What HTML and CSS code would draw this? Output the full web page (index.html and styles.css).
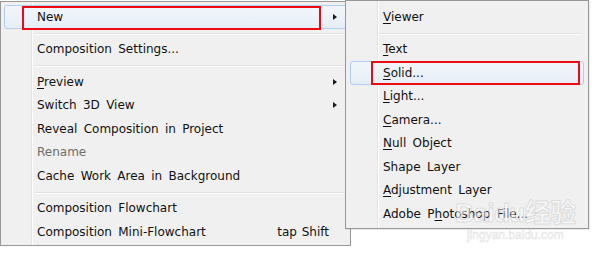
FILE: index.html
```html
<!DOCTYPE html>
<html>
<head>
<meta charset="utf-8">
<link rel="stylesheet" href="styles.css">
</head>
<body>
<div class="stage">
  <div class="menu main">
    <div class="item hover"><span class="label">New</span><span class="arrow"></span></div>
    <div class="sep"></div>
    <div class="item"><span class="label">Composition Settings...</span></div>
    <div class="sep"></div>
    <div class="item"><span class="label"><u>P</u>review</span><span class="arrow"></span></div>
    <div class="item"><span class="label">Switch 3D View</span><span class="arrow"></span></div>
    <div class="item"><span class="label">Reveal Composition in Project</span></div>
    <div class="item disabled"><span class="label">Rename</span></div>
    <div class="item"><span class="label">Cache Work Area in Background</span></div>
    <div class="sep"></div>
    <div class="item"><span class="label">Composition Flowchart</span></div>
    <div class="item"><span class="label">Composition Mini-Flowchart</span><span class="shortcut">tap Shift</span></div>
  </div>

  <div class="menu sub">
    <div class="item"><span class="label"><u>V</u>iewer</span></div>
    <div class="sep"></div>
    <div class="item"><span class="label"><u>T</u>ext</span></div>
    <div class="item hover"><span class="label"><u>S</u>olid...</span></div>
    <div class="item"><span class="label"><u>L</u>ight...</span></div>
    <div class="item"><span class="label"><u>C</u>amera...</span></div>
    <div class="item"><span class="label"><u>N</u>ull Object</span></div>
    <div class="item"><span class="label">Shape Layer</span></div>
    <div class="item"><span class="label"><u>A</u>djustment Layer</span></div>
    <div class="item"><span class="label">Adobe P<u>h</u>otoshop File...</span></div>
  </div>

  <div class="mark mark-new"></div>
  <div class="mark mark-solid"></div>

  <div class="watermark">
    <div class="wm-logo">Baidu经验</div>
    <div class="wm-url">jingyan.baidu.com</div>
  </div>
</div>
</body>
</html>
```

FILE: styles.css
```css
html, body {
  margin: 0;
  padding: 0;
  background: #ffffff;
}

body {
  font-family: "DejaVu Sans", "Noto Sans", sans-serif;
  font-size: 12px;
  word-spacing: 2.5px;
  color: #111;
}

.stage {
  position: relative;
  width: 595px;
  height: 263px;
  overflow: hidden;
  padding-top: 1px;
  box-sizing: border-box;
}

.menu {
  box-sizing: border-box;
  border: 1px solid #979797;
  display: flex;
  flex-direction: column;
}

.main {
  width: 351px;
  height: 245px;
  padding: 3px 2px 1.5px 2px;
  background:
    linear-gradient(to right,
      transparent 30px, #e2e3e3 30px, #e2e3e3 31px,
      #ffffff 31px, #ffffff 32px, transparent 32px),
    #f0f0f0;
  background-origin: padding-box;
}

.sub {
  position: absolute;
  left: 345px;
  top: 0;
  width: 244px;
  height: 229px;
  padding: 4.5px 3px 1.5px 3px;
  background:
    linear-gradient(to right,
      transparent 31px, #e2e3e3 31px, #e2e3e3 32px,
      #ffffff 32px, #ffffff 33px, transparent 33px),
    #f0f0f0;
  box-shadow: 1px 1px 1px rgba(0, 0, 0, 0.08);
  z-index: 2;
}

.item {
  box-sizing: border-box;
  height: 23.5px;
  flex: none;
  display: flex;
  align-items: center;
  border: 1px solid transparent;
  border-radius: 3px;
  padding-left: 32px;
  padding-right: 8px;
  white-space: nowrap;
}

.main .item {
  margin-left: 1px;
}

.sub .item {
  padding-left: 32px;
  margin-left: 1px;
  margin-right: 1px;
}

.item.hover {
  border-color: #b0cdf2;
  background: linear-gradient(#f3f7fc, #e6edf7);
}

.item.disabled {
  color: #6d6d6d;
}

.label {
  flex: 1;
}

.label u {
  text-decoration-thickness: 1px;
  text-underline-offset: 2px;
}

.shortcut {
  margin-right: 10px;
  word-spacing: 1px;
}

.arrow {
  width: 0;
  height: 0;
  border-top: 3.5px solid transparent;
  border-bottom: 3.5px solid transparent;
  border-left: 4px solid #1a1a1a;
  margin-right: 2px;
}

.sep {
  flex: none;
  height: 9px;
  margin-left: 31px;
  margin-right: 0;
  background: linear-gradient(to bottom,
    transparent 4px, #e0e0e0 4px, #e0e0e0 5px,
    #ffffff 5px, #ffffff 6px, transparent 6px);
}

.sub .sep {
  height: 8.5px;
  margin-left: 30px;
  margin-right: 3px;
  background: linear-gradient(to bottom,
    transparent 3.5px, #e0e0e0 3.5px, #e0e0e0 4.5px,
    #ffffff 4.5px, #ffffff 5.5px, transparent 5.5px);
}

.mark {
  position: absolute;
  box-sizing: border-box;
  border: 2px solid #ee0a12;
  z-index: 3;
}

.mark-new {
  left: 22px;
  top: 6px;
  width: 299px;
  height: 24px;
}

.mark-solid {
  left: 371px;
  top: 61px;
  width: 209px;
  height: 24px;
}

.watermark {
  position: absolute;
  left: 455px;
  top: 198px;
  z-index: 4;
  text-align: center;
  pointer-events: none;
  word-spacing: 0;
}

.wm-logo {
  font-family: "Liberation Sans", "Noto Sans CJK SC", sans-serif;
  font-weight: bold;
  font-size: 26px;
  line-height: 30px;
  letter-spacing: -0.5px;
  color: rgba(255, 255, 255, 0.55);
  -webkit-text-stroke: 1px rgba(190, 190, 190, 0.45);
}

.wm-url {
  font-family: "Liberation Sans", sans-serif;
  font-size: 12px;
  line-height: 14px;
  color: rgba(255, 255, 255, 0.6);
  -webkit-text-stroke: 0.6px rgba(200, 200, 200, 0.5);
}
```
